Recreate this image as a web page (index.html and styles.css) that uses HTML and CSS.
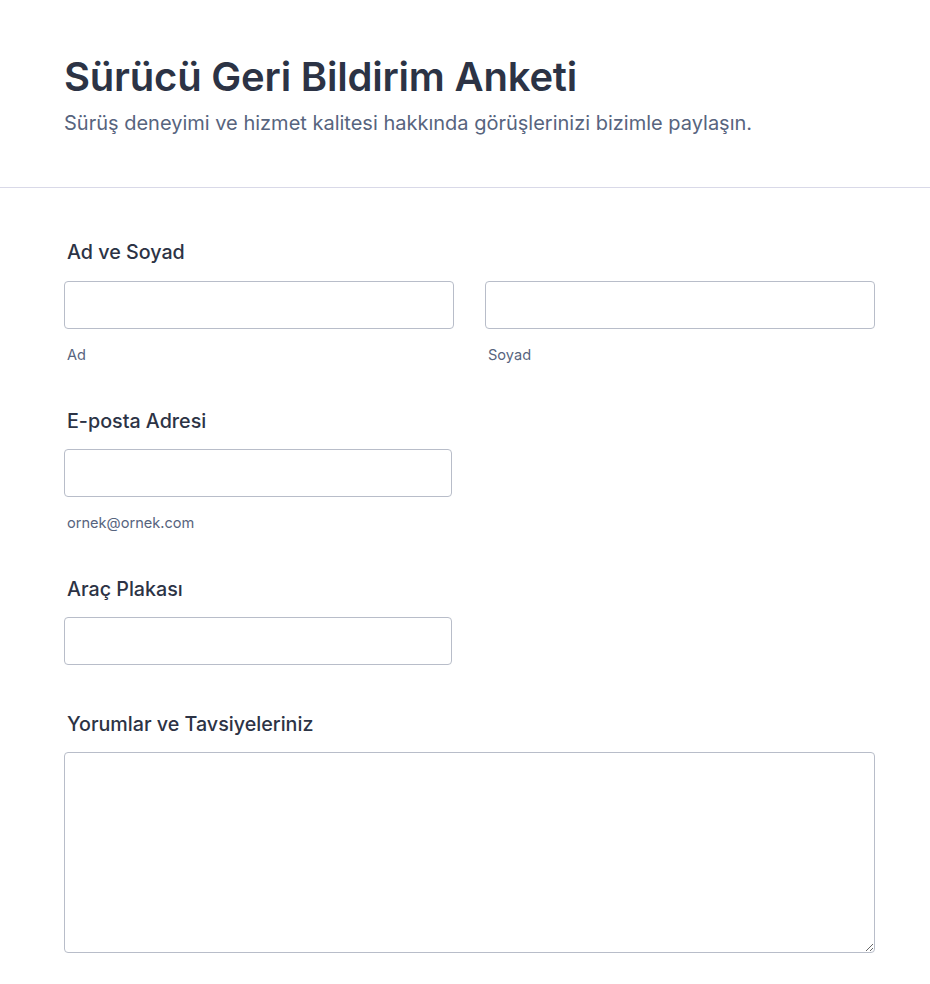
FILE: index.html
```html
<!DOCTYPE html>
<html lang="tr">
<head>
<meta charset="utf-8">
<title>Sürücü Geri Bildirim Anketi</title>
<link rel="stylesheet" href="styles.css">
</head>
<body>
<header class="header">
  <h1 class="title">Sürücü Geri Bildirim Anketi</h1>
  <p class="subtitle">Sürüş deneyimi ve hizmet kalitesi hakkında görüşlerinizi bizimle paylaşın.</p>
</header>
<main class="form">
  <div class="field">
    <label class="label label-first">Ad ve Soyad</label>
    <div class="name-row">
      <div class="name-col">
        <input class="input" type="text">
        <span class="sublabel">Ad</span>
      </div>
      <div class="name-col">
        <input class="input" type="text">
        <span class="sublabel">Soyad</span>
      </div>
    </div>
  </div>
  <div class="field">
    <label class="label">E-posta Adresi</label>
    <div class="half">
      <input class="input" type="email">
      <span class="sublabel">ornek@ornek.com</span>
    </div>
  </div>
  <div class="field field-plain">
    <label class="label">Araç Plakası</label>
    <div class="half">
      <input class="input" type="text">
    </div>
  </div>
  <div class="field">
    <label class="label">Yorumlar ve Tavsiyeleriniz</label>
    <textarea class="textarea"></textarea>
  </div>
</main>
</body>
</html>
```
FILE: styles.css
```css
* { box-sizing: border-box; }
html, body { margin: 0; padding: 0; background: #ffffff; }
body {
  font-family: Inter, "Noto Sans", "Liberation Sans", sans-serif;
  color: #2c3345;
}
.header {
  padding: 53px 64px 50px;
  border-bottom: 1px solid #d9d9e8;
}
.title {
  margin: 0;
  font-size: 40px;
  line-height: 48px;
  font-weight: 600;
  color: #2c3345;
  letter-spacing: -0.2px;
}
.subtitle {
  margin: 8px 0 0;
  font-size: 20px;
  line-height: 28px;
  color: #57647e;
}
.form {
  padding: 52px 55px 30px 64px;
}
.field {
  display: flex;
  flex-direction: column;
  margin-bottom: 44px;
}
.field-plain { margin-bottom: 47px; }
.label {
  display: block;
  font-size: 19.7px;
  line-height: 24px;
  font-weight: 500;
  color: #2c3345;
  margin: 0 0 16px 3px;
}
.label-first { margin-bottom: 17px; }
.name-row {
  display: flex;
  gap: 31px;
}
.name-col {
  width: 390px;
  display: flex;
  flex-direction: column;
}
.half {
  width: 388px;
  display: flex;
  flex-direction: column;
}
.input {
  display: block;
  width: 100%;
  height: 48px;
  border: 1px solid #b8bdc9;
  border-radius: 4px;
  background: #fff;
  margin: 0;
  padding: 0 10px;
  font: inherit;
}
.sublabel {
  display: block;
  margin: 16px 0 0 3px;
  font-size: 14.6px;
  line-height: 20px;
  color: #57647e;
}
.textarea {
  display: block;
  width: 811px;
  height: 201px;
  border: 1px solid #b8bdc9;
  border-radius: 4px;
  background: #fff;
  margin: 0;
  padding: 10px;
  font: inherit;
  resize: vertical;
}
```
